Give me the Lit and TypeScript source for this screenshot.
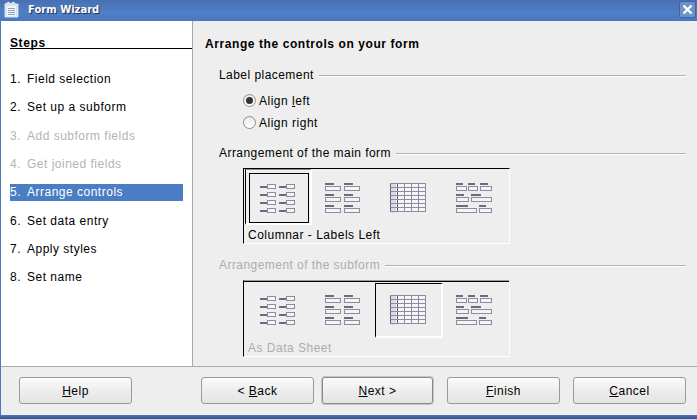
import { LitElement, html, css, svg } from "lit";
import { customElement } from "lit/decorators.js";

const box = (x: number, y: number, w: number, h = 5) =>
  svg`<rect x="${x + 0.5}" y="${y + 0.5}" width="${w - 1}" height="${h - 1}" fill="#f4f4f6" stroke="#8c8ca0"/>`;
const dash = (x: number, y: number, w: number) =>
  svg`<rect x="${x}" y="${y}" width="${w}" height="2" fill="#6a6a80"/>`;

function iconLeft() {
  return [3, 11, 19, 27].map((y) => svg`
    ${dash(0, y, 7)}${box(7, y - 2, 9)}${dash(19, y, 7)}${box(26, y - 2, 9)}`);
}
function iconTop() {
  return [0, 11, 22].map((y) => svg`
    ${dash(0, y, 9)}${box(0, y + 3, 16)}${dash(19, y, 9)}${box(19, y + 3, 16)}`);
}
function iconTable() {
  const cells = [];
  for (let r = 0; r < 8; r++) {
    cells.push(svg`<rect x="0" y="${r * 4}" width="6" height="4" fill="#dcdce6"/>`);
  }
  const lines = [];
  for (const x of [0, 7, 14, 21, 28, 35]) {
    lines.push(svg`<line x1="${x + 0.5}" y1="0" x2="${x + 0.5}" y2="29" stroke="${x < 8 ? "#5c5c72" : "#8c8ca0"}"/>`);
  }
  for (let r = 0; r <= 7; r++) {
    const y = r === 7 ? 28.5 : r * 4 + 0.5;
    lines.push(svg`<line x1="0" y1="${y}" x2="36" y2="${y}" stroke="#8c8ca0"/>`);
  }
  return svg`<rect x="0" y="0" width="36" height="29" fill="#f6f6f8"/>${cells}${lines}`;
}
function iconMixed() {
  return svg`
    ${dash(0, 0, 7)}${box(0, 3, 11)}${dash(12, 0, 7)}${box(12, 3, 10)}${dash(24, 0, 8)}${box(24, 3, 12)}
    ${dash(0, 11, 8)}${box(0, 14, 13)}${dash(15, 11, 10)}${box(15, 14, 21)}
    ${dash(0, 22, 12)}${box(0, 25, 21)}${dash(23, 22, 7)}${box(23, 25, 13)}`;
}
const icons = [iconLeft, iconTop, iconTable, iconMixed];

@customElement("layout-picker")
class LayoutPicker extends LitElement {
  static properties = {
    selected: { type: Number },
    caption: { type: String },
    disabled: { type: Boolean, reflect: true },
  };
  selected = 0;
  caption = "";
  disabled = false;

  static styles = css`
    :host {
      display: block;
      width: 267px;
      height: 76px;
      margin-left: 38px;
      box-sizing: border-box;
      border-left: 1px solid #000;
      border-top: 1px solid #000;
      border-right: 1px solid #fff;
      border-bottom: 1px solid #fff;
      font-size: 12px;
      color: #000;
    }
    :host([disabled]) {
      height: 77px;
      border-top: 1px solid #9a9a9a;
      color: #adadad;
    }
    .tiles {
      display: grid;
      grid-template-columns: 65px 65px 66px 66px;
      height: 55px;
      padding-left: 1px;
    }
    :host([disabled]) .tiles {
      height: 54px;
      border-top: 1px solid #000;
      margin-left: -1px;
      padding-left: 2px;
    }
    .tile {
      position: relative;
      height: 55px;
      box-sizing: border-box;
    }
    .tile svg {
      display: block;
      position: absolute;
      left: 15px;
      top: 14px;
    }
    :host([disabled]) .tile svg {
      top: 13px;
    }
    .sel::before {
      content: "";
      position: absolute;
      inset: 0 -2px -1px 0;
      box-sizing: border-box;
      border-left: 1px solid #000;
      border-top: 1px solid #8a8a8a;
      border-right: 2px solid #fff;
      border-bottom: 2px solid #fff;
    }
    :host([disabled]) .sel::before {
      top: 1px;
      left: 0;
      border-top: 1px solid #000;
    }
    .focus {
      position: absolute;
      left: 4px;
      top: 4px;
      width: 60px;
      height: 50px;
      box-sizing: border-box;
      border: 1px solid #000;
    }
    .cap {
      padding: 4px 0 0 4px;
      line-height: 15px;
      letter-spacing: 0.5px;
    }
    :host([disabled]) .cap {
      padding-top: 5px;
    }
  `;

  render() {
    return html`
      <div class="tiles">
        ${icons.map(
          (ic, i) => html`<div class="tile ${i === this.selected ? "sel" : ""}">
            ${i === this.selected && !this.disabled ? html`<div class="focus"></div>` : ""}
            <svg width="36" height="30" viewBox="0 0 36 30" shape-rendering="crispEdges">${ic()}</svg>
          </div>`
        )}
      </div>
      <div class="cap">${this.caption}</div>
    `;
  }
}

@customElement("app-root")
export class AppRoot extends LitElement {
  static styles = css`
    :host {
      display: flex;
      flex-direction: column;
      width: 697px;
      height: 419px;
      overflow: hidden;
      background: #eeeeee;
      font-family: "Liberation Sans", Arial, sans-serif;
      font-size: 12px;
      color: #000;
    }
    .title {
      flex: none;
      height: 21px;
      box-sizing: border-box;
      display: flex;
      align-items: center;
      padding: 0 1px 3px 4px;
      background: linear-gradient(#4770b2, #4f7fc8 60%, #4a78bf);
      color: #fff;
      font-family: "DejaVu Sans", sans-serif;
      font-weight: bold;
      font-size: 10px;
      text-shadow: 1px 1px 1px #1c2f55;
    }
    .title svg.logo {
      margin-right: 9px;
    }
    .title .name {
      flex: 1;
    }
    .close {
      width: 17px;
      height: 17px;
      box-sizing: border-box;
      border: 1px solid #3d659f;
      border-radius: 2px;
      background: #6d92c8;
      display: flex;
      align-items: center;
      justify-content: center;
    }
    .main {
      flex: none;
      height: 345px;
      display: flex;
      border-left: 1px solid #4a78bf;
    }
    .side {
      flex: none;
      width: 182px;
      background: #fff;
      border-right: 1px solid #a9a9a9;
      padding-left: 9px;
    }
    .steps-h {
      height: 28px;
      box-sizing: border-box;
      padding-top: 15px;
      line-height: 15px;
      font-weight: bold;
      letter-spacing: 0.6px;
      text-decoration: underline;
      border-bottom: 1px solid #000;
    }
    ul {
      list-style: none;
      margin: 16.4px 0 0 0;
      padding: 0;
      width: 173px;
    }
    li {
      height: 28.3px;
      display: flex;
      align-items: center;
      letter-spacing: 0.5px;
    }
    li > span {
      display: flex;
      width: 100%;
      height: 17px;
      line-height: 17px;
      white-space: pre;
    }
    li .num {
      flex: none;
      width: 17px;
    }
    li.off {
      color: #b3b3b3;
    }
    li.cur > span {
      background: #4a7dc4;
      color: #fff;
    }
    .content {
      flex: 1;
      padding: 16px 11px 0 12px;
      min-width: 0;
    }
    h1 {
      margin: 0;
      font-size: 12px;
      line-height: 15px;
      font-weight: bold;
      letter-spacing: 0.58px;
    }
    .group {
      display: flex;
      align-items: center;
      gap: 5px;
      margin-left: 14px;
      height: 15px;
      line-height: 15px;
      letter-spacing: 0.45px;
      white-space: nowrap;
    }
    .group::after {
      content: "";
      flex: 1;
      height: 1px;
      background: #b0b0b0;
      box-shadow: 0 1px 0 #fff;
    }
    .group.off {
      color: #adadad;
    }
    .g1 { margin-top: 16px; }
    .g2 { margin-top: 16px; }
    .g3 { margin-top: 14px; }
    .radios {
      margin: 10px 0 0 38px;
      display: flex;
      flex-direction: column;
      gap: 7px;
    }
    .radio {
      display: flex;
      align-items: center;
      gap: 3px;
      height: 15px;
      letter-spacing: 0.5px;
      white-space: nowrap;
    }
    .radio i {
      display: block;
      width: 13px;
      height: 13px;
      box-sizing: border-box;
      border: 1px solid #8f8f8f;
      border-radius: 50%;
      background: linear-gradient(#e8e8e8, #fff);
      position: relative;
    }
    .radio i.on::after {
      content: "";
      position: absolute;
      left: 2px;
      top: 2px;
      width: 7px;
      height: 7px;
      border-radius: 50%;
      background: #333;
    }
    layout-picker.p1 { margin-top: 7px; }
    layout-picker.p2 { margin-top: 7px; }
    .foot {
      flex: 1;
      display: flex;
      padding: 10px 11px 0 18px;
      border-top: 1px solid #a9a9a9;
      border-left: 1px solid #4a78bf;
      box-sizing: border-box;
    }
    button {
      width: 113px;
      height: 27px;
      padding: 0;
      margin: 0;
      box-sizing: border-box;
      border: 1px solid #9a9a9a;
      border-radius: 3px;
      background: linear-gradient(#fbfbfb, #ececec 55%, #e4e4e4);
      font: inherit;
      letter-spacing: 0.5px;
      color: #000;
    }
    .b-back { margin-left: 69px; }
    .b-next {
      width: 111px;
      margin-left: 8px;
      box-shadow: 0 0 0 1px #c4c4c4;
      border-color: #8a8a8a;
    }
    .b-finish { margin-left: 14px; }
    .b-cancel { margin-left: 13px; }
    .bottom {
      flex: none;
      height: 4px;
      background: linear-gradient(#4a78bf, #2f5391);
    }
  `;

  render() {
    const steps: [string, string, string][] = [
      ["1.", "Field selection", ""],
      ["2.", "Set up a subform", ""],
      ["3.", "Add subform fields", "off"],
      ["4.", "Get joined fields", "off"],
      ["5.", "Arrange controls", "cur"],
      ["6.", "Set data entry", ""],
      ["7.", "Apply styles", ""],
      ["8.", "Set name", ""],
    ];
    return html`
      <div class="title">
        <svg class="logo" width="15" height="17" viewBox="0 0 15 17">
          <path d="M1 3 L5 1 L6 3 L10 1 L11 3 L14 3 L14 16 L1 16 Z" fill="#d8e2ee" stroke="#eef2f7" stroke-width="0.8"/>
          <rect x="3" y="5" width="9" height="10" fill="#f2f5f9"/>
          <path d="M4 7.5H11M4 9.5H11M4 11.5H11M4 13.5H11" stroke="#8ea4c0" stroke-width="1"/>
        </svg>
        <span class="name">Form Wizard</span>
        <div class="close">
          <svg width="11" height="11" viewBox="0 0 11 11">
            <path d="M1.5 1.5L9.5 9.5M9.5 1.5L1.5 9.5" stroke="#fff" stroke-width="2.4"/>
          </svg>
        </div>
      </div>
      <div class="main">
        <div class="side">
          <div class="steps-h">Steps</div>
          <ul>
            ${steps.map(([n, t, c]) => html`<li class=${c}><span><span class="num">${n}</span><span>${t}</span></span></li>`)}
          </ul>
        </div>
        <div class="content">
          <h1>Arrange the controls on your form</h1>
          <div class="group g1">Label placement</div>
          <div class="radios">
            <div class="radio"><i class="on"></i><span>Align <u>l</u>eft</span></div>
            <div class="radio"><i></i><span>Align ri<u>g</u>ht</span></div>
          </div>
          <div class="group g2">Arrangement of the main form</div>
          <layout-picker class="p1" .selected=${0} caption="Columnar - Labels Left"></layout-picker>
          <div class="group g3 off">Arrangement of the subform</div>
          <layout-picker class="p2" .selected=${2} disabled caption="As Data Sheet"></layout-picker>
        </div>
      </div>
      <div class="foot">
        <button><u>H</u>elp</button>
        <button class="b-back">&lt; <u>B</u>ack</button>
        <button class="b-next"><u>N</u>ext &gt;</button>
        <button class="b-finish"><u>F</u>inish</button>
        <button class="b-cancel"><u>C</u>ancel</button>
      </div>
      <div class="bottom"></div>
    `;
  }
}
